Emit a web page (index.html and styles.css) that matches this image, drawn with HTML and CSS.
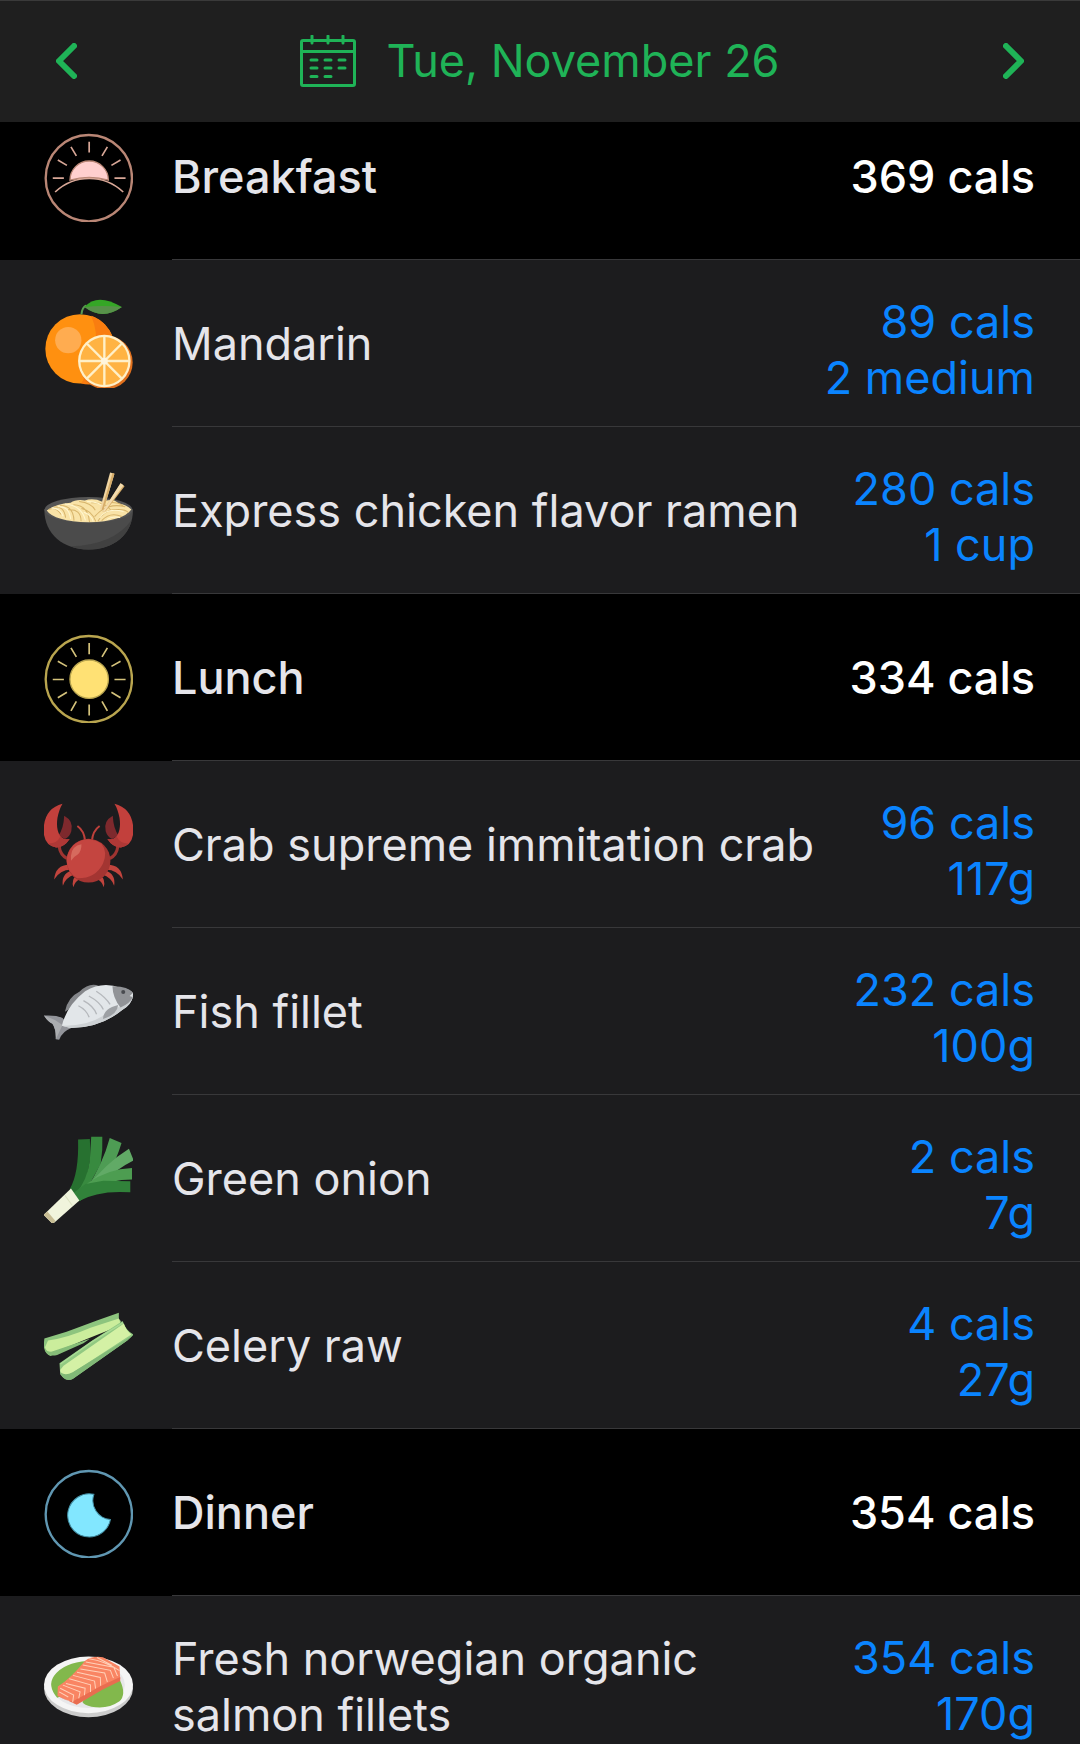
FILE: index.html
```html
<!DOCTYPE html>
<html lang="en">

<head>
  <meta charset="UTF-8">
  <meta name="viewport" content="width=device-width, initial-scale=1.0">
  <title>Food log</title>
  <link rel="stylesheet" href="styles.css">
</head>

<body>

  <header class="date-bar">
    <button class="nav-button" aria-label="Previous day">
      <svg width="21" height="36" viewBox="0 0 21 36"><path d="M18 3 3 18l15 15"/></svg>
    </button>
    <button class="date-button">
      <svg class="calendar" width="56" height="52" viewBox="0 0 56 52">
        <rect x="1.5" y="5.5" width="53" height="45" rx="1.5"/>
        <path d="M2 16.500h52M12 1v7M28 1v7M43 1v7"/>
        <path d="M11 25h6M25 25h6M39 25h6M11 33h6M25 33h6M39 33h6M11 41.500h6M25 41.500h6"/>
      </svg>
      <span>Tue, November 26</span>
    </button>
    <button class="nav-button" aria-label="Next day">
      <svg width="21" height="36" viewBox="0 0 21 36"><path d="m3 3 15 15L3 33"/></svg>
    </button>
  </header>

  <main class="log">

    <section>
      <div class="row meal">
        <svg class="icon" viewBox="42 38 264 264">
          <g fill="none" stroke="#b98675" stroke-width="7">
            <circle cx="175" cy="172" r="128"/>
            <path d="M119 178A57 57 0 1 1 233 178Q176 162 119 178Z" fill="#ffcfce" stroke-width="4"/>
            <path d="M75 213Q118 173 176 173T277 213M176 64v32M122 79l16 27M230 79l-16 27M83 118l27 16M269 118l-27 16M68 172h33M251 172h33" stroke="#d8a797" stroke-width="5"/>
          </g>
        </svg>
        <div class="content">
          <h2 class="name">Breakfast</h2>
          <div class="total">369 cals</div>
        </div>
      </div>

      <div class="row">
        <svg class="icon" viewBox="44 43 264 264">
          <circle cx="151" cy="191" r="103" fill="#ff9010"/>
          <path d="M184 93A103 103 0 0 1 252 173L211 291A103 103 0 0 1 154 294Q225 190 184 93Z" fill="#f97d10"/>
          <circle cx="116" cy="165" r="39" fill="#ffac50"/>
          <path d="M155 89Q157 67 170 62" fill="none" stroke="#5b9b52" stroke-width="6"/>
          <path d="M164 67Q202 23 275 67Q218 108 164 67Z" fill="#35a626"/>
          <path d="M164 67Q214 61 275 67Q218 108 164 67Z" fill="#58914a"/>
          <circle cx="227" cy="231" r="80" fill="#e1701d"/>
          <circle cx="223" cy="227" r="78" fill="#fff0c8"/>
          <circle cx="223" cy="227" r="71" fill="#ffb343"/>
          <path d="M223 154v146M150 227h146M171 175l104 104M275 175 171 279" stroke="#fff0c8" stroke-width="7"/>
          <circle cx="223" cy="227" r="10" fill="#fff5dc"/>
        </svg>
        <div class="content">
          <div class="name">Mandarin</div>
          <div class="amount">89 cals<br>2 medium</div>
        </div>
      </div>

      <div class="row">
        <svg class="icon" viewBox="43 34 264 264">
          <path d="M44 164C44 238 102 282 175 282S307 238 307 164Z" fill="#4b4b4b"/>
          <path d="M303 194Q248 269 121 272Q145 282 175 282C238 282 291 249 303 194Z" fill="#414141"/>
          <ellipse cx="175" cy="164" rx="131" ry="38" fill="#555"/>
          <path d="M51 166Q80 145 122 143Q137 132 164 136Q190 128 216 140Q248 128 264 145Q287 148 302 163Q278 198 175 201Q73 198 51 166Z" fill="#f9e3a7"/>
          <g fill="none" stroke="#d7b46b" stroke-width="3">
            <path d="M57 163Q78 153 94 178M72 156Q102 151 107 187M91 151Q130 151 132 196M114 164Q153 160 153 198M130 149Q174 150 178 200M147 139Q184 143 195 165M154 160Q185 166 197 199M183 143Q226 140 240 164M203 198Q220 165 253 163T293 172M214 196Q239 169 274 184M193 184Q230 141 284 155M241 142Q266 142 278 152"/>
          </g>
          <g fill="none" stroke="#fff7d1" stroke-width="3">
            <path d="M65 159Q91 158 100 183M84 155Q117 151 122 191M105 147Q155 151 166 195M161 171Q184 178 189 199M171 139Q210 140 224 158M208 188Q229 156 279 169M229 193Q246 182 269 187"/>
          </g>
          <path d="M239 53 252 57 219 166 209 162Z" fill="#f1d6a3"/>
          <path d="M252 57 219 166 214 164 246 55ZM270 85 282 94 226 168 216 170Z" fill="#d7ad69"/>
          <path d="m270 85 9 6-55 77-8 2Z" fill="#f4dcae"/>
        </svg>
        <div class="content">
          <div class="name">Express chicken flavor ramen</div>
          <div class="amount">280 cals<br>1 cup</div>
        </div>
      </div>
    </section>

    <section>
      <div class="row meal">
        <svg class="icon" viewBox="42 40 264 264">
          <g fill="none" stroke="#b9a54f" stroke-width="7">
            <circle cx="175" cy="174" r="128"/>
            <circle cx="176" cy="174" r="57" fill="#ffe174" stroke-width="4"/>
            <path d="M176 67v33M176 249v33M68 175h33M251 175h33M122 81l16 27M230 81l-16 27M83 121l27 15M269 121l-27 15M83 229l27-16M269 229l-27-16M122 268l16-28M230 268l-16-28" stroke="#d4c27b" stroke-width="5"/>
          </g>
        </svg>
        <div class="content">
          <h2 class="name">Lunch</h2>
          <div class="total">334 cals</div>
        </div>
      </div>

      <div class="row">
        <svg class="icon" viewBox="43 46 264 264">
          <g id="crab-side">
            <path d="M103 93Q132 109 124 139Q119 156 105 162L86 151Q101 132 103 93Z" fill="#7e292d"/>
            <path d="M88 184Q91 209 112 220" fill="none" stroke="#9f3431" stroke-width="9"/>
            <path d="M98 57Q40 72 42 142Q45 182 79 187Q103 187 119 162Q100 165 90 151Q78 132 83 99Q88 73 98 57Z" fill="#c2403c"/>
            <path d="M79 187Q103 187 119 162Q102 166 91 155Q81 176 56 175Q65 185 79 187Z" fill="#ae3836"/>
            <path d="M142 123Q162 137 165 167" fill="none" stroke="#bd403b" stroke-width="6"/>
            <path d="M122 238Q77 236 73 282Q91 253 122 253ZM125 255Q93 266 99 300Q107 276 134 267ZM141 269Q123 281 130 305Q135 285 151 280Z" fill="#c2443d"/>
          </g>
          <use href="#crab-side" transform="translate(350 0) scale(-1 1)"/>
          <circle cx="175" cy="226" r="65" fill="#a33532"/>
          <path d="M110 226a65 65 0 0 1 103-51q20 25 5 59-22 45-77 44a65 65 0 0 1-31-52Z" fill="#c44540"/>
          <path d="M123 211Q125 182 154 177Q155 196 143 208Q129 216 123 226Z" fill="#d66a5e"/>
        </svg>
        <div class="content">
          <div class="name">Crab supreme immitation crab</div>
          <div class="amount">96 cals<br>117g</div>
        </div>
      </div>

      <div class="row">
        <svg class="icon" viewBox="43 37 264 264">
          <path d="M43 181Q78 179 98 188L124 218Q98 227 88 253L78 251Q79 220 68 205Q54 199 43 181Z" fill="#92949a"/>
          <path d="M43 181Q73 190 98 209L78 251Q79 220 68 205Q54 199 43 181Z" fill="#abadb0"/>
          <path d="M105 170Q113 127 149 110Q177 82 206 93L180 125Z" fill="#85878b"/>
          <path d="M96 211Q111 151 165 109Q216 78 270 99Q307 103 308 119Q304 148 276 164Q210 218 122 218Z" fill="#e2e6e9"/>
          <path d="M96 211Q180 214 235 170Q284 151 308 117Q306 146 276 164Q210 218 122 218Z" fill="#cdd1d4"/>
          <path d="M246 94Q292 93 307 114L297 123 306 127Q299 145 270 157Q247 129 246 94Z" fill="#919397"/>
          <path d="M218 191Q220 160 263 150Q260 179 218 191Z" fill="#9da0a4"/>
          <circle cx="278" cy="111" r="6" fill="#494b50"/>
          <g fill="none" stroke="#b5b8bc" stroke-width="4">
            <path d="M145 152Q169 164 177 186M160 137Q190 153 199 177M176 123Q209 141 219 163M198 109Q226 127 239 148"/>
          </g>
        </svg>
        <div class="content">
          <div class="name">Fish fillet</div>
          <div class="amount">232 cals<br>100g</div>
        </div>
      </div>

      <div class="row">
        <svg class="icon" viewBox="43 43 264 264">
          <path d="M144 59 179 58 181 113 166 190 151 241 119 207Q147 159 144 59Z" fill="#277130"/>
          <path d="M183 51H216Q218 91 211 132L151 241 135 222Q171 184 179 121Z" fill="#388a3f"/>
          <path d="M238 55 273 70Q259 116 239 151L167 209Q217 134 238 55Z" fill="#4e9c54"/>
          <path d="m295 87 14 34q-47 23-84 60l-61 29q61-80 131-123Z" fill="#61aa66"/>
          <path d="M304 144v34q-63 0-111 27l-42 36 21-52Q232 147 304 144Z" fill="#4d9d51"/>
          <path d="M166 191 219 182 299 183V216Q204 209 144 243L125 222Z" fill="#31823a"/>
          <path d="M123 205 148 240 69 310 42 283Z" fill="#f0f4dc"/>
          <path d="M53 273 77 301 69 310 42 283Z" fill="#c7bd94"/>
          <path d="M105 225l22 30" stroke="#dce3c2" stroke-width="3"/>
        </svg>
        <div class="content">
          <div class="name">Green onion</div>
          <div class="amount">2 cals<br>7g</div>
        </div>
      </div>

      <div class="row">
        <svg class="icon" viewBox="43 34 264 264">
          <path d="M44 145 110 125 202 91 265 69V87L272 95 62 197Q45 191 42 167Z" fill="#8dc57e"/>
          <path d="M55 151Q112 143 181 113L265 86 272 106 77 184Q49 189 46 171Z" fill="#cbed9c"/>
          <path d="M45 173Q48 187 67 184L179 146 160 159 82 194Q57 201 47 182Z" fill="#86bd78"/>
          <path d="M89 219 186 151 276 93Q284 119 309 134L290 151 128 265Q108 274 91 251Z" fill="#91c982"/>
          <path d="M101 226 225 139 280 101Q287 123 302 133L128 247Q93 266 91 239Z" fill="#d4f1a5"/>
          <path d="M92 245Q106 257 128 245L309 134 290 151 128 265Q102 277 92 245Z" fill="#81b977"/>
          <path d="M92 221 184 156 278 98" fill="none" stroke="#a9db94" stroke-width="4"/>
        </svg>
        <div class="content">
          <div class="name">Celery raw</div>
          <div class="amount">4 cals<br>27g</div>
        </div>
      </div>
    </section>

    <section>
      <div class="row meal">
        <svg class="icon" viewBox="42 40 264 264">
          <circle cx="175" cy="174" r="128" fill="none" stroke="#6097b2" stroke-width="7"/>
          <path d="M190 115A64 64 0 1 0 239 190A57 57 0 0 1 190 115Z" fill="#82e7ff" stroke="#438da2" stroke-width="3"/>
        </svg>
        <div class="content">
          <h2 class="name">Dinner</h2>
          <div class="total">354 cals</div>
        </div>
      </div>

      <div class="row">
        <svg class="icon" viewBox="43 54 264 264">
          <ellipse cx="175" cy="191" rx="132" ry="86" fill="#ccc"/>
          <ellipse cx="175" cy="181" rx="132" ry="84" fill="#f5f5f5"/>
          <ellipse cx="174" cy="181" rx="109" ry="69" fill="#e7e7e9"/>
          <path d="M82 219Q52 184 73 154Q102 114 172 110L157 190ZM157 232Q176 181 269 169Q288 210 267 230Q231 255 184 246Q162 241 157 232Z" fill="#82b84c"/>
          <path d="M84 186Q125 159 164 110Q186 94 218 99L267 127 269 164 213 193 141 239 83 214Z" fill="#f98563"/>
          <path d="M83 213Q110 231 129 230L213 184 269 158V170L216 196 140 240Z" fill="#e96d50"/>
          <g fill="none" stroke="#ffd0b8" stroke-width="3">
            <path d="M177 104Q224 111 267 139M167 113 250 129 261 155M158 122 240 138 249 161M151 134 223 146 231 172M141 144 210 159 211 184M129 153 193 170 196 192M118 163 181 181 181 202M108 177 165 191 163 212M99 182 150 202 146 221M91 191 131 211 128 233M88 202 115 217M200 100 244 123"/>
          </g>
        </svg>
        <div class="content">
          <div class="name">Fresh norwegian organic salmon fillets</div>
          <div class="amount">354 cals<br>170g</div>
        </div>
      </div>
    </section>

  </main>

</body>

</html>
```
FILE: styles.css
```css
* {
  box-sizing: border-box;
}

body {
  margin: 0;
  height: 100vh;
  overflow: hidden;
  background-color: #000;
  color: #e5e5ea;
  font-family: Inter, 'Liberation Sans', sans-serif;
  font-size: 45px;
  line-height: 56px;
}

.date-bar {
  position: relative;
  z-index: 1;
  display: flex;
  justify-content: space-between;
  align-items: center;
  height: 122px;
  padding: 0 56px 2px;
  background-color: #1f1f1f;
  border-top: 1px solid #3a3a3a;
}

button {
  display: flex;
  align-items: center;
  padding: 0;
  border: 0;
  background: none;
  color: #1fb357;
  font: inherit;
  cursor: pointer;
}

button svg {
  fill: none;
  stroke: currentColor;
  stroke-width: 6;
  stroke-linecap: round;
  stroke-linejoin: round;
}

.date-button {
  gap: 30px;
}

.date-button .calendar {
  stroke-width: 3;
}

/* the list is scrolled a little way under the date bar */
.log {
  margin-top: -29px;
}

.row {
  display: flex;
  align-items: center;
  padding-left: 44px;
  background-color: #1c1c1e;
}

.meal {
  background-color: #000;
  font-weight: 500;
}

.icon {
  flex: none;
  width: 89px;
  height: 89px;
  margin-right: 39px;
}

.meal .icon {
  margin-top: 2px;
}

.content {
  flex: 1;
  display: flex;
  align-items: center;
  gap: 30px;
  min-height: 167px;
  padding-right: 45px;
  border-bottom: 1px solid #38383a;
}

.name {
  flex: 1;
  margin: 0;
  padding: 35px 0 33px;
  font-size: inherit;
  font-weight: inherit;
}

.total {
  padding-top: 2px;
  color: #fff;
}

.amount {
  align-self: flex-start;
  padding: 34px 0 20px;
  color: #0a84ff;
  text-align: right;
  white-space: nowrap;
}
```
